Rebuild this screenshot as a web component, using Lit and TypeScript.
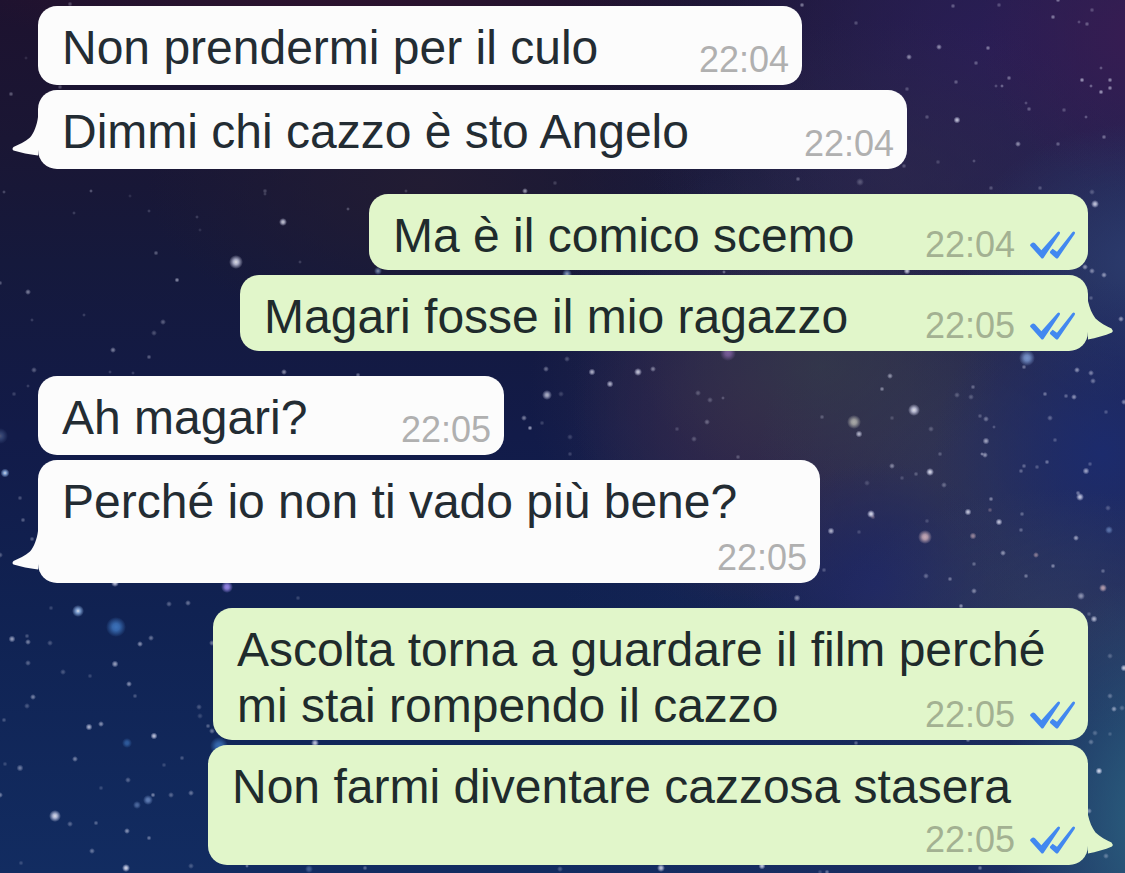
import { LitElement, html, svg, css, nothing } from "lit";
import { customElement, property } from "lit/decorators.js";
import { classMap } from "lit/directives/class-map.js";
import { styleMap } from "lit/directives/style-map.js";

interface Message {
  text: string;
  time: string;
  out?: boolean;
  width: number;
  below?: boolean;
  tail?: boolean;
}

const groups: Message[][] = [
  [
    { text: "Non prendermi per il culo", time: "22:04", width: 764 },
    { text: "Dimmi chi cazzo è sto Angelo", time: "22:04", width: 869, tail: true },
  ],
  [
    { text: "Ma è il comico scemo", time: "22:04", out: true, width: 719 },
    { text: "Magari fosse il mio ragazzo", time: "22:05", out: true, width: 848, tail: true },
  ],
  [
    { text: "Ah magari?", time: "22:05", width: 466 },
    { text: "Perché io non ti vado più bene?", time: "22:05", width: 782, below: true, tail: true },
  ],
  [
    { text: "Ascolta torna a guardare il film perché mi stai rompendo il cazzo", time: "22:05", out: true, width: 875 },
    { text: "Non farmi diventare cazzosa stasera", time: "22:05", out: true, width: 880, below: true, tail: true },
  ],
];

// x, y, radius, opacity, colour key
type Star = [number, number, number, number, string?];
const stars: Star[] = [
  [236, 262, 7, 1], [283, 222, 4, 0.9], [177, 280, 2.5, 0.8], [156, 253, 2.5, 0.5], [11, 94, 2.5, 0.5], [91, 191, 2, 0.5],
  [26, 58, 2, 0.2], [70, 4, 2.5, 0.4], [60, 87, 2.5, 0.4], [265, 191, 2.5, 0.35], [265, 194, 2, 0.3], [4, 192, 2, 0.4],
  [74, 213, 2, 0.3], [149, 211, 2, 0.3], [197, 217, 2, 0.3], [348, 209, 2, 0.45], [300, 262, 2, 0.3], [0, 283, 2.5, 0.5],
  [200, 230, 2, 0.2], [130, 196, 2, 0.2], [525, 191, 3, 0.9], [555, 183, 2.5, 0.3], [406, 191, 2, 0.3], [567, 274, 5, 0.7, "b"],
  [378, 271, 4, 0.6, "b"], [724, 272, 2, 0.6], [907, 271, 3.5, 0.9],
  [802, 5, 2.5, 0.7], [953, 6, 2.5, 0.5], [999, 5, 2.5, 0.4], [1058, 0, 2.5, 0.7], [1053, 17, 2.5, 0.7], [1092, 10, 2.5, 0.4],
  [1079, 22, 2, 0.4], [1087, 24, 2.5, 0.5], [939, 47, 3, 0.8], [909, 57, 3, 0.8], [988, 48, 2.5, 0.7], [976, 63, 2.5, 0.5],
  [856, 23, 2.5, 0.4], [956, 82, 2.5, 0.5], [1009, 78, 2.5, 0.6], [1002, 86, 2, 0.6], [996, 86, 2, 0.4], [1082, 80, 2.5, 0.9],
  [1091, 86, 2, 0.6], [1101, 92, 2.5, 0.9], [1110, 80, 2.5, 0.8], [1110, 88, 2.5, 0.8], [1101, 68, 2, 0.5], [957, 120, 3.5, 0.9],
  [1029, 109, 2.5, 0.5], [1026, 103, 2, 0.4], [1064, 110, 2.5, 0.4], [1086, 117, 2, 0.5], [927, 117, 2.5, 0.4], [907, 89, 2.5, 0.4],
  [1018, 144, 3, 0.8], [1058, 144, 2.5, 0.5], [1104, 137, 2.5, 0.6], [974, 161, 2, 0.4], [938, 162, 2.5, 0.3], [904, 166, 2.5, 0.4],
  [860, 182, 4, 0.3], [798, 179, 2.5, 0.5], [991, 188, 2.5, 0.4], [1040, 188, 2.5, 0.4], [1092, 192, 3, 0.4], [1095, 204, 4, 0.9],
  [1085, 267, 3, 0.8], [1092, 271, 3, 0.7], [1104, 275, 3, 0.8], [1121, 319, 3, 0.8], [1091, 298, 2.5, 0.4],
  [28, 292, 3, 0.7], [32, 320, 2, 0.3], [84, 315, 2, 0.3], [163, 322, 3, 0.5], [154, 333, 3, 0.4], [113, 350, 3, 0.7],
  [149, 357, 2.5, 0.5], [34, 370, 3, 0.5], [28, 386, 2, 0.3], [14, 394, 2.5, 0.3], [110, 372, 2, 0.3], [133, 373, 2, 0.3],
  [284, 372, 3, 0.8], [358, 375, 2.5, 0.6], [0, 436, 8, 0.3, "b"], [5, 473, 4.5, 1, "b"], [20, 498, 2.5, 0.4], [23, 520, 2.5, 0.5],
  [32, 539, 2.5, 0.5], [0, 555, 3, 0.5],
  [546, 369, 3, 0.6], [592, 372, 3.5, 0.8], [638, 372, 4, 0.9], [653, 369, 3, 0.7], [610, 384, 3.5, 0.8], [547, 395, 5, 0.8],
  [561, 394, 3, 0.3], [524, 418, 3, 0.7], [530, 428, 2.5, 0.9], [542, 423, 2.5, 0.3], [570, 437, 3, 0.3], [567, 359, 3, 0.4],
  [728, 353, 8, 0.8, "p"], [698, 393, 3, 0.4], [710, 400, 3, 0.4], [723, 398, 2, 0.4], [707, 422, 3, 0.5], [677, 429, 2.5, 0.3],
  [694, 439, 3, 0.4], [738, 457, 2.5, 0.4], [570, 454, 2.5, 0.3],
  [1027, 358, 8, 1, "s"], [1024, 367, 2.5, 0.6], [890, 376, 3, 0.8], [882, 389, 2.5, 0.7], [914, 410, 6, 1], [854, 422, 7, 0.9, "y"],
  [859, 434, 3.5, 0.8], [892, 418, 2.5, 0.3], [931, 429, 3, 0.4], [822, 417, 2.5, 0.4], [957, 395, 3, 0.4], [971, 397, 3, 0.4],
  [973, 387, 2.5, 0.5], [1077, 370, 3, 0.8], [1091, 373, 3, 0.7], [1093, 381, 3, 0.6], [1045, 394, 2.5, 0.6], [1066, 396, 2.5, 0.5],
  [1074, 397, 3, 0.8], [1124, 402, 3, 0.7], [1106, 412, 2.5, 0.4], [1050, 418, 3, 0.5], [986, 419, 3, 0.6], [980, 416, 2.5, 0.4],
  [994, 427, 2, 0.4], [986, 441, 3.5, 0.7], [985, 455, 3, 0.8], [982, 454, 2, 0.7], [1055, 440, 2.5, 0.4], [940, 454, 2.5, 0.4],
  [892, 466, 3, 0.7], [930, 472, 4, 1], [916, 474, 2.5, 0.4], [902, 478, 2.5, 0.3], [944, 485, 3, 0.5], [867, 483, 3, 0.3],
  [1047, 462, 2.5, 0.6], [1024, 466, 2.5, 0.5], [1021, 471, 2.5, 0.5], [1037, 467, 2.5, 0.4], [1086, 471, 3.5, 0.7],
  [1090, 464, 2.5, 0.4], [1080, 497, 4, 0.9], [1078, 493, 2.5, 0.6], [871, 514, 4, 1], [873, 517, 2.5, 0.5, "r"], [831, 531, 3.5, 0.8],
  [991, 499, 2.5, 0.7], [990, 510, 2.5, 0.5, "r"], [968, 512, 3.5, 0.9], [999, 522, 3.5, 0.9], [973, 536, 3.5, 0.7, "r"],
  [925, 537, 7, 1, "r"], [927, 521, 2.5, 0.3], [1022, 514, 2.5, 0.5], [1021, 530, 2.5, 0.5], [1109, 530, 4, 0.7, "s"],
  [1108, 508, 3, 0.4], [1076, 538, 3, 0.9], [1003, 553, 3, 0.8], [1036, 555, 3, 0.8, "r"], [1053, 566, 2.5, 0.7], [974, 564, 2.5, 0.5],
  [926, 576, 3, 0.5], [950, 579, 2.5, 0.6], [1026, 576, 2.5, 0.6], [1103, 571, 2.5, 0.5], [824, 570, 2.5, 0.4], [859, 532, 2.5, 0.3],
  [227, 587, 6, 1, "v"], [115, 583, 4, 0.9], [78, 611, 6, 1, "b"], [116, 627, 10, 1, "d"], [12, 639, 3.5, 0.7], [28, 642, 3, 0.7],
  [27, 636, 2.5, 0.4], [50, 643, 3, 0.4], [28, 663, 3, 0.5], [51, 608, 2.5, 0.3], [140, 644, 3, 0.8], [151, 638, 3, 0.6],
  [115, 664, 3.5, 0.7], [63, 672, 3, 0.4], [90, 676, 2.5, 0.3], [129, 684, 3, 0.8], [135, 696, 2.5, 0.4], [33, 697, 3, 0.7],
  [27, 706, 3, 0.4], [4, 720, 2.5, 0.4], [89, 727, 3.5, 0.8], [101, 724, 3, 0.8], [154, 736, 3.5, 0.9], [127, 743, 5, 0.7, "d"],
  [75, 759, 3, 0.7], [20, 768, 3.5, 0.5], [5, 764, 2.5, 0.3], [128, 780, 3, 0.5], [101, 788, 2.5, 0.3], [0, 795, 3, 0.7],
  [137, 805, 4, 0.6, "s"], [148, 800, 5, 0.8, "s"], [153, 795, 2.5, 0.7], [171, 795, 3, 0.5], [191, 793, 3, 0.6], [182, 758, 2.5, 0.4],
  [164, 765, 2.5, 0.3], [55, 816, 6, 1], [70, 824, 3, 0.5], [96, 823, 2.5, 0.5], [127, 831, 3, 0.8], [149, 838, 2.5, 0.6],
  [92, 851, 3, 0.6], [126, 868, 4, 1], [191, 866, 3, 0.4], [21, 863, 2.5, 0.3], [309, 869, 4, 0.5, "s"], [365, 868, 2.5, 0.5],
  [199, 707, 3, 0.4], [200, 716, 3, 0.3], [208, 726, 2.5, 0.5], [212, 731, 3, 0.6], [219, 746, 9, 0.9, "d"], [315, 743, 4, 0.9],
  [169, 604, 3, 0.5], [188, 603, 3, 0.6], [212, 643, 3, 0.6], [298, 598, 2.5, 0.3], [247, 866, 2, 0.6],
  [797, 598, 3.5, 0.6], [974, 591, 3, 0.7], [961, 606, 2.5, 0.8], [1103, 588, 4, 0.9, "r"], [1081, 596, 4, 0.6], [1094, 619, 3.5, 0.8],
  [1089, 614, 2.5, 0.4], [1110, 656, 3, 0.4], [1124, 668, 3.5, 0.9], [1110, 696, 3, 0.5], [1114, 709, 3, 0.8], [1122, 708, 3, 0.4],
  [1095, 733, 3, 0.4], [1091, 742, 3, 0.5], [968, 740, 2.5, 0.6], [856, 743, 2.5, 0.5], [1099, 771, 3.5, 1], [1089, 811, 3, 0.7],
  [1106, 856, 3, 0.5], [762, 866, 3.5, 0.9], [827, 872, 2.5, 0.6], [980, 868, 2.5, 0.6], [661, 868, 4, 0.9], [560, 869, 3, 0.4],
  [1110, 734, 2.5, 0.3], [820, 872, 2.5, 0.3],
];

const tones: Record<string, string> = {
  w: "#e6e8ff",
  b: "#a5ccff",
  s: "#86a6de",
  d: "#4480cc",
  y: "#d0d0c4",
  r: "#e2bfc6",
  v: "#ac96ff",
  p: "#9a73bd",
};

@customElement("night-sky")
class NightSky extends LitElement {
  static styles = css`
    :host {
      position: absolute;
      inset: 0;
      overflow: hidden;
      background:
        radial-gradient(ellipse 14% 28% at 103% 94%, #2b6280 0%, #2b628000 100%),
        radial-gradient(ellipse 20% 14% at 94% 70%, #353f6299 0%, #353f6200 100%),
        radial-gradient(ellipse 15% 20% at 98% 52%, #1c2b6c 0%, #1c2b6c00 100%),
        radial-gradient(ellipse 12% 14% at 78% 67%, #1f2763 0%, #1f276300 100%),
        radial-gradient(ellipse 16% 14% at 73% 42%, #343e4a99 0%, #343e4a00 100%),
        radial-gradient(ellipse 18% 24% at 85% 55%, #34395899 20%, #34395800 100%),
        radial-gradient(ellipse 17% 16% at 102% 30%, #2c3c6e 0%, #2c3c6e00 100%),
        radial-gradient(ellipse 14% 18% at 101% 4%, #371c52 0%, #371c5200 100%),
        radial-gradient(ellipse 22% 18% at 80% 20%, #2e2a4c99 0%, #2e2a4c00 100%),
        radial-gradient(ellipse 24% 28% at 88% 6%, #2a1d55 0%, #2a1d5500 100%),
        radial-gradient(ellipse 16% 22% at 67% 47%, #33284a 0%, #33284a00 100%),
        radial-gradient(ellipse 28% 28% at 75% 45%, #2c294c 20%, #2c294c00 100%),
        radial-gradient(ellipse 25% 18% at 38% 21%, #221c33 0%, #221c3300 100%),
        radial-gradient(ellipse 35% 12% at 30% -4%, #33142f 0%, #33142f00 100%),
        linear-gradient(90deg, #1d276000 50%, #262f6199 100%),
        linear-gradient(180deg, #1d122f 0%, #1a1634 16%, #15193c 30%, #121b49 50%, #102252 70%, #122c61 100%);
    }
    .stars {
      display: block;
      width: 100%;
      height: 100%;
    }
  `;

  render() {
    return html`
      <svg class="stars" viewBox="0 0 1125 873" preserveAspectRatio="xMidYMid slice" aria-hidden="true">
        <defs>
          ${Object.entries(tones).map(
            ([key, color]) => svg`
              <radialGradient id=${"glow-" + key}>
                <stop offset="0" stop-color=${key === "b" || key === "w" ? "#ffffff" : color} />
                <stop offset="0.35" stop-color=${color} stop-opacity="0.85" />
                <stop offset="1" stop-color=${color} stop-opacity="0" />
              </radialGradient>`
          )}
        </defs>
        ${stars.map(
          ([x, y, r, o, tone = "w"]) =>
            svg`<circle cx=${x} cy=${y} r=${r} opacity=${r < 3.5 ? o * 0.65 : o * 0.85} fill=${`url(#glow-${tone})`} />`
        )}
      </svg>
    `;
  }
}

@customElement("chat-bubble")
class ChatBubble extends LitElement {
  @property({ attribute: false }) message!: Message;

  static styles = css`
    :host {
      display: flex;
    }
    .bubble {
      position: relative;
      box-sizing: border-box;
      max-width: 100%;
      border-radius: 19px;
      background: #fcfcfc;
      color: #232c33;
    }
    .bubble.out {
      margin-left: auto;
      background: #e1f6ca;
      color: #1f2b2c;
    }
    .text {
      display: flow-root;
      margin: 0;
      padding: 14px 13px 6px 24px;
      font-size: 48px;
      line-height: 56px;
    }
    .meta {
      float: right;
      display: flex;
      align-items: center;
      gap: 15px;
      margin-top: 21px;
      font-size: 36px;
      line-height: 38px;
      color: #b0b0b0;
    }
    .below .meta {
      margin-top: 9px;
    }
    .out .meta {
      margin-top: 18px;
      color: #a3b192;
    }
    .out.below .meta {
      margin-top: 6px;
    }
    .ticks {
      display: block;
      width: 45px;
      height: 28px;
      fill: #4288f0;
    }
    .tail {
      position: absolute;
      right: 100%;
      bottom: 13px;
      width: 26px;
      height: 40px;
      fill: #fcfcfc;
    }
    .out .tail {
      right: auto;
      left: 100%;
      bottom: 11px;
      fill: #e1f6ca;
    }
  `;

  private tail(out: boolean) {
    return html`
      <svg class="tail" viewBox="0 0 26 40" aria-hidden="true">
        ${out
          ? svg`<path d="M0 1C1.500 8 4 14 7.500 18.500C12 23 18 26 23.500 28.500Q25.500 30.500 24 32.500C17 35.500 8 38 0 39.500Z" />`
          : svg`<path d="M26 1C25 9 22 17 18 21.500C13 26 7 28.500 1.500 31Q-0.500 33 1.500 34.500C9 36.500 17 38.500 26 39.500Z" />`}
      </svg>
    `;
  }

  render() {
    const { text, time, width, out = false, below = false, tail } = this.message;
    return html`
      <article class=${classMap({ bubble: true, out, below })} style=${styleMap({ width: `${width}px` })}>
        <p class="text">${text}<span class="meta">
          <time>${time}</time>
          ${out
            ? html`<svg class="ticks" viewBox="0 0 135 84" role="img" aria-label="Letto">
                <path d="M2 46Q-2 42 3 38L7 35Q11 33 15 37L34 58L82 4Q86 0 89 3Q91 5 89 9L41 80Q37 85 33 80Z" />
                <path d="M61 67Q58 63 62 59L68 53L81 62L127 4Q131 0 134 3Q136 5 134 9L85 80Q81 85 77 81Z" />
              </svg>`
            : nothing}
        </span></p>
        ${tail ? this.tail(out) : nothing}
      </article>
    `;
  }
}

@customElement("app-root")
class AppRoot extends LitElement {
  static styles = css`
    :host {
      display: block;
      position: relative;
      box-sizing: border-box;
      min-height: 100vh;
      overflow: hidden;
      font-family: "Liberation Sans", Arial, Helvetica, sans-serif;
    }
    .chat {
      position: relative;
      display: flex;
      flex-direction: column;
      gap: 25px;
      padding: 6px 37px 8px 38px;
    }
    .group {
      display: flex;
      flex-direction: column;
      gap: 5px;
    }
  `;

  render() {
    return html`
      <night-sky></night-sky>
      <main class="chat">
        ${groups.map(
          (group) => html`
            <section class="group">
              ${group.map((message) => html`<chat-bubble .message=${message}></chat-bubble>`)}
            </section>
          `
        )}
      </main>
    `;
  }
}
